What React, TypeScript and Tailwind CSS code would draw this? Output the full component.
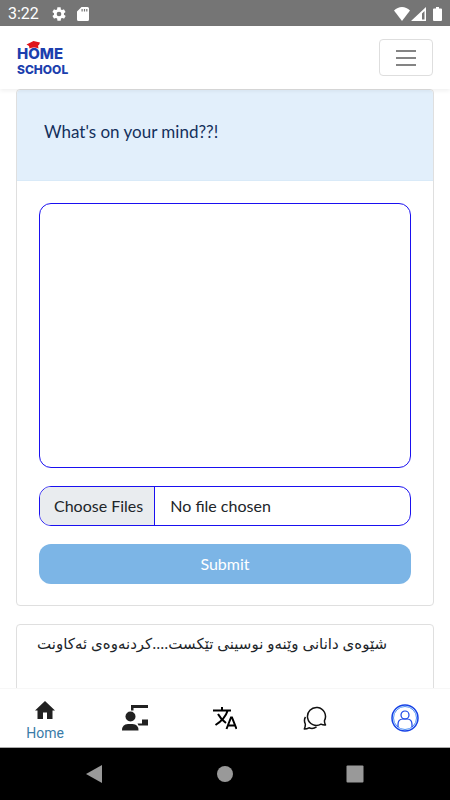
import type { ReactNode } from "react";

function StatusBar() {
  return (
    <div className="flex h-[26px] shrink-0 items-center bg-[#757575] pl-2 pr-2 pt-0.5 font-['Roboto',sans-serif] text-white">
      <span className="text-base leading-none">3:22</span>
      <svg viewBox="0 0 24 24" className="ml-3 size-4" fill="currentColor" aria-hidden="true">
        <path d="M19.4 13c0-.3.1-.6.1-1s0-.7-.1-1l2.100-1.600c.2-.2.3-.4.100-.7l-2-3.400c-.1-.2-.4-.3-.6-.2l-2.500 1c-.5-.4-1.100-.7-1.700-1L14.500 2.400c0-.2-.3-.4-.5-.4h-4c-.3 0-.5.2-.5.400L9.100 5.100c-.6.300-1.200.600-1.700 1l-2.500-1c-.2-.1-.5 0-.6.200l-2 3.400c-.1.300-.1.500.1.700L4.600 11c-.1.300-.1.700-.1 1s0 .7.100 1l-2.100 1.600c-.2.200-.3.400-.1.700l2 3.400c.1.200.4.300.6.200l2.500-1c.5.400 1.100.700 1.700 1l.4 2.700c0 .2.200.4.500.4h4c.2 0 .5-.2.500-.4l.4-2.700c.6-.3 1.200-.6 1.700-1l2.500 1c.2.1.5 0 .6-.2l2-3.400c.1-.3.1-.5-.1-.7zM12 15.500a3.500 3.500 0 1 1 0-7 3.500 3.500 0 0 1 0 7z" />
      </svg>
      <svg viewBox="0 0 12 14" className="ml-2.5 h-3.5 w-3" fill="currentColor" aria-hidden="true">
        <path d="M4.500 0h6Q12 0 12 1.500v11q0 1.500-1.500 1.500h-9Q0 14 0 12.500v-8zM4.500 2v2.500h1.200V2zM6.900 2v2.500h1.200V2zM9.200 2v2.500h1.200V2z" fillRule="evenodd" />
      </svg>
      <div className="ml-auto flex items-center gap-px">
        <svg viewBox="0 0 16 14" className="h-3.5 w-4" fill="currentColor" aria-hidden="true">
          <path d="M8 14 0 3.500Q3.500 0 8 0t8 3.500z" />
        </svg>
        <svg viewBox="0 0 15 14" className="h-3.5 w-[15px]" fill="currentColor" aria-hidden="true">
          <path d="M15 0v14H0zM13.500 4 11 6.500V12.500h2.500z" fillRule="evenodd" />
        </svg>
        <svg viewBox="0 0 9 14" className="ml-1.5 h-3.5 w-[9px]" fill="currentColor" aria-hidden="true">
          <path d="M3 0h3v1.500h2q1 0 1 1V13q0 1-1 1H1q-1 0-1-1V2.500q0-1 1-1h2z" />
        </svg>
      </div>
    </div>
  );
}

function Logo() {
  return (
    <a href="#home" className="block">
      <svg viewBox="0 0 56 38" className="h-[38px] w-14" aria-label="Home School">
        <g fontFamily="Inter, sans-serif" fontWeight="800" fill="#1c3fae">
          <text x="0" y="20" fontSize="15">HOME</text>
          <text x="0" y="35" fontSize="12">SCHOOL</text>
        </g>
        <path d="M9.500 5.500 16.500 2l6.500 1.500-1 2.500-1 .5.500 3q-4.500-2-9 0l-.5-2.500z" fill="#e0131b" />
      </svg>
    </a>
  );
}

function Header() {
  return (
    <header className="z-10 flex h-[63px] shrink-0 items-center justify-between bg-white pl-[17px] pr-[17px] shadow-[0_2px_4px_rgba(0,0,0,0.06)]">
      <Logo />
      <button
        type="button"
        aria-label="Toggle navigation"
        className="flex h-[37px] w-[54px] items-center justify-center rounded border border-[#dedede]"
      >
        <svg viewBox="0 0 22 18" className="h-[18px] w-[22px]" stroke="#5c5c5c" strokeWidth="1.500" aria-hidden="true">
          <path d="M1 2h20M1 9h20M1 16h20" />
        </svg>
      </button>
    </header>
  );
}

function PostForm() {
  return (
    <section className="rounded border border-[#dfdfdf]">
      <div className="h-[91px] rounded-t border-b border-[#d9eaf8] bg-[#e2effb] px-[27px] pt-7">
        <label htmlFor="post" className="text-[17px] leading-7 text-[#14305c]">
          What's on your mind??!
        </label>
      </div>
      <form className="flex flex-col gap-[18px] px-[22px] pb-[21px] pt-[22px]" onSubmit={(e) => e.preventDefault()}>
        <textarea
          id="post"
          className="block h-[265px] w-full resize-none rounded-xl border border-[#1a10f0] p-3 outline-none"
        />
        <input
          type="file"
          multiple
          aria-label="Choose files"
          className="block h-10 w-full overflow-hidden rounded-xl border border-[#1a10f0] text-base leading-[38px] text-[#212529] file:mr-[15px] file:h-[38px] file:border-r file:border-[#1a10f0] file:bg-[#e9ecef] file:pl-3.5 file:pr-[11px] file:text-base file:font-normal file:text-[#212529]"
        />
        <button type="submit" className="h-10 w-full rounded-xl bg-[#7cb5e6] text-base text-white">
          Submit
        </button>
      </form>
    </section>
  );
}

function NavItem({ label, text, children }: { label: string; text?: string; children: ReactNode }) {
  return (
    <a
      href={`#${label.toLowerCase()}`}
      aria-label={label}
      className="flex flex-1 flex-col items-center justify-center text-[#3a7ba8]"
    >
      {children}
      {text && <span className="pt-1 font-['Roboto',sans-serif] text-sm leading-5">{text}</span>}
    </a>
  );
}

function BottomNav() {
  return (
    <nav className="z-10 flex h-[60px] shrink-0 border-b border-t border-b-[#aaaaaa] border-t-[#f7f7f7] bg-white">
      <NavItem label="Home" text="Home">
        <svg viewBox="0 0 20 18" className="mt-2 h-[18px] w-5" fill="#212121" aria-hidden="true">
          <path d="M10 0 20 9.500h-2.500V18H12v-6.500H8V18H2.500V9.500H0z" />
        </svg>
      </NavItem>
      <NavItem label="Teachers">
        <svg viewBox="0 0 26 26" className="size-[26px]" fill="#212121" aria-hidden="true">
          <path d="M9 0h17v3H11.500v2.500H9zM20 14.500h6v6h-9.500l-1-2H20z" />
          <circle cx="8.500" cy="11.500" r="5" />
          <path d="M0 25.500q0-6.500 6-6.500h4.500q6 0 6 6.500z" />
        </svg>
      </NavItem>
      <NavItem label="Language">
        <svg viewBox="0 0 24 24" className="size-6" fill="none" stroke="#000" strokeWidth="2" aria-hidden="true">
          <path d="M0 4.500h18M9 1v3.500M14.500 5Q12 13 2.500 19M5 8q3 5.500 8 9" />
          <path d="M13.500 23 18 11.500h1L23.500 23M15 19.500h7" />
        </svg>
      </NavItem>
      <NavItem label="Chat">
        <svg viewBox="0 0 24 24" className="size-6" fill="none" stroke="#111" strokeWidth="1.500" strokeLinejoin="round" aria-hidden="true">
          <path d="M21.500 14.500a9 9 0 1 0-3.500 3.700q2 1 4.500.8-1.200-2-1-4.500z" />
          <path d="M2.500 11Q.5 14 2.300 18q.2 2.500-1 5 2.700 0 4.700-1.200 4 1.700 7.500-1" />
        </svg>
      </NavItem>
      <NavItem label="Profile">
        <svg viewBox="0 0 28 28" className="size-7" fill="none" stroke="#1743e6" aria-hidden="true">
          <circle cx="14" cy="14" r="13" strokeWidth="1.500" />
          <circle cx="14" cy="14" r="11.500" strokeWidth="1" stroke="#4f92f5" />
          <circle cx="14" cy="11" r="4" strokeWidth="1.200" />
          <path d="M7 23v-2.500q0-5.500 5-5.500h4q5 0 5 5.500V23" strokeWidth="1.200" />
        </svg>
      </NavItem>
    </nav>
  );
}

function SystemNav() {
  return (
    <div className="flex h-[52px] shrink-0 items-center justify-center gap-28 bg-black text-[#999999]">
      <button type="button" aria-label="Back">
        <svg viewBox="0 0 18 18" className="size-[18px]" fill="currentColor">
          <path d="M0 9 16 0v18z" />
        </svg>
      </button>
      <button type="button" aria-label="Home screen">
        <svg viewBox="0 0 18 18" className="size-[18px]" fill="currentColor">
          <circle cx="9" cy="9" r="8" />
        </svg>
      </button>
      <button type="button" aria-label="Recent apps">
        <svg viewBox="0 0 18 18" className="size-[18px]" fill="currentColor">
          <rect x="0.500" y="0.500" width="17" height="17" rx="1" />
        </svg>
      </button>
    </div>
  );
}

export default function App() {
  return (
    <div className="flex h-screen flex-col overflow-hidden bg-white font-['Lato',sans-serif]">
      <StatusBar />
      <Header />
      <main className="flex min-h-0 flex-1 flex-col gap-[18px] overflow-hidden px-4">
        <PostForm />
        <article lang="ckb" dir="rtl" className="h-40 shrink-0 rounded border border-[#dfdfdf] pl-4 pr-[46px] pt-2">
          <p className="whitespace-nowrap font-['Noto_Sans','DejaVu_Sans',sans-serif] text-[15px] leading-5 text-[#212529]">
            شێوەی دانانی وێنەو نوسینی تێکست....کردنەوەی ئەکاونت
          </p>
        </article>
      </main>
      <BottomNav />
      <SystemNav />
    </div>
  );
}
